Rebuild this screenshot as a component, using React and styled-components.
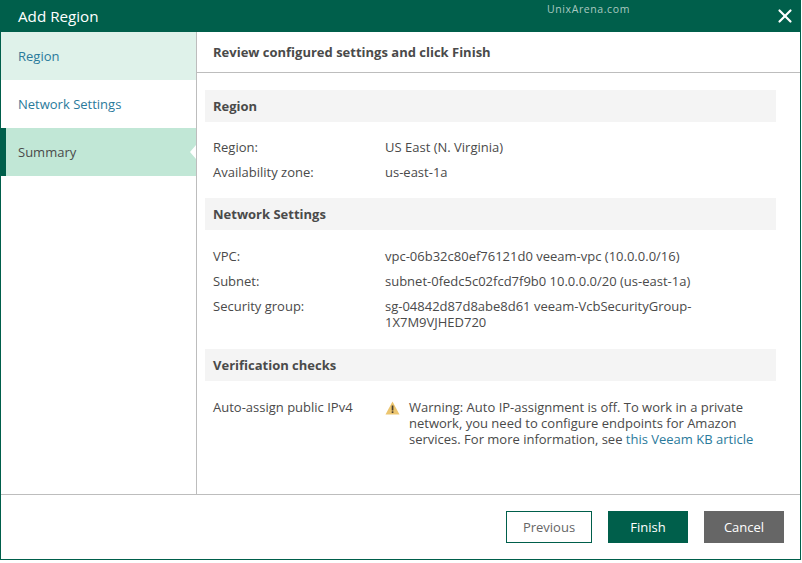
import React from "react";
import styled, { createGlobalStyle } from "styled-components";
import { X } from "lucide-react";

const GlobalStyle = createGlobalStyle`
  html, body {
    margin: 0;
    padding: 0;
    background: #fff;
  }
  * {
    box-sizing: border-box;
  }
`;

const Dialog = styled.div`
  width: 801px;
  height: 560px;
  display: flex;
  flex-direction: column;
  background: #fff;
  border: solid #005f4b;
  border-width: 0 1px 1px 1px;
  box-shadow: 0 3px 0 #a9b0ad;
  font-family: "Open Sans", "Liberation Sans", sans-serif;
  font-size: 13px;
  color: #4a4a4a;
`;

const TitleBar = styled.div`
  position: relative;
  flex: 0 0 32px;
  display: flex;
  align-items: center;
  justify-content: space-between;
  padding: 0 4px 0 17px;
  background: #005f4b;
  color: #fff;
`;

const Title = styled.div`
  font-size: 15.2px;
  line-height: 32px;
`;

const Watermark = styled.div`
  position: absolute;
  left: 546px;
  top: 2px;
  font-size: 10.5px;
  letter-spacing: 0.6px;
  line-height: 14px;
  color: #a9c9c0;
`;

const Body = styled.div`
  flex: 1;
  display: flex;
  min-height: 0;
`;

const Sidebar = styled.div`
  flex: 0 0 196px;
  border-right: 1px solid #bdbdbd;
`;

const NavItem = styled.div`
  position: relative;
  height: 48px;
  display: flex;
  align-items: center;
  padding-left: ${(p) => (p.$active ? "12px" : "17px")};
  background: ${(p) => (p.$active ? "#c1e7d6" : p.$done ? "#dff2ea" : "#fff")};
  border-left: ${(p) => (p.$active ? "5px solid #005f4b" : "none")};
  color: ${(p) => (p.$active ? "#4a4a4a" : "#2a7a9b")};

  ${(p) =>
    p.$active &&
    `&::after {
      content: "";
      position: absolute;
      right: 0;
      top: 17px;
      border: 7px solid transparent;
      border-left: 0;
      border-right: 6px solid #fff;
    }`}
`;

const Main = styled.div`
  flex: 1;
  display: flex;
  flex-direction: column;
  min-width: 0;
`;

const MainHeader = styled.div`
  flex: 0 0 41px;
  display: flex;
  align-items: center;
  padding-left: 16px;
  border-bottom: 1px solid #bdbdbd;
  font-weight: 700;
  color: #4a4a4a;
`;

const Content = styled.div`
  padding: 17px 24px 0 8px;
`;

const Section = styled.div`
  margin-bottom: ${(p) => p.$gap || 0}px;
`;

const SectionTitle = styled.div`
  height: 32px;
  display: flex;
  align-items: center;
  padding-left: 8px;
  background: #f4f4f4;
  font-weight: 700;
  color: #4a4a4a;
`;

const Rows = styled.div`
  padding-top: ${(p) => p.$top}px;
`;

const Row = styled.div`
  display: flex;
  padding-left: 8px;
  min-height: 25px;
  line-height: 16px;
  padding-top: 3px;
`;

const Label = styled.div`
  flex: 0 0 172px;
`;

const Value = styled.div`
  flex: 1;
`;

const Warning = styled.div`
  display: flex;
  gap: 9px;
  flex: 1;
`;

const WarningText = styled.div`
  width: 370px;
  line-height: 16px;
`;

const Link = styled.a`
  color: #2a7a9b;
  text-decoration: none;
`;

const Footer = styled.div`
  flex: 0 0 65px;
  display: flex;
  justify-content: flex-end;
  align-items: flex-start;
  gap: 16px;
  padding: 16px 16px 0 0;
  border-top: 1px solid #bdbdbd;
`;

const Button = styled.button`
  width: ${(p) => p.$w}px;
  height: 32px;
  padding: 0;
  font: inherit;
  background: ${(p) => p.$bg};
  color: ${(p) => p.$fg};
  border: 1px solid ${(p) => p.$bd};
`;

function WarnIcon() {
  return (
    <svg width="15" height="14" viewBox="0 0 15 14" style={{ flex: "none", marginTop: 2 }}>
      <path d="M7.5 0.5 L14.5 13.5 H0.5 Z" fill="#ecc56f" />
      <rect x="6.7" y="4.5" width="1.7" height="5" fill="#4a4030" />
      <rect x="6.7" y="10.3" width="1.7" height="1.7" fill="#4a4030" />
    </svg>
  );
}

export default function App() {
  return (
    <>
      <GlobalStyle />
      <Dialog>
        <TitleBar>
          <Title>Add Region</Title>
          <Watermark>UnixArena.com</Watermark>
          <X size={22} strokeWidth={2.4} color="#fff" />
        </TitleBar>
        <Body>
          <Sidebar>
            <NavItem $done>Region</NavItem>
            <NavItem>Network Settings</NavItem>
            <NavItem $active>Summary</NavItem>
          </Sidebar>
          <Main>
            <MainHeader>Review configured settings and click Finish</MainHeader>
            <Content>
              <Section $gap={12}>
                <SectionTitle>Region</SectionTitle>
                <Rows $top={14}>
                  <Row>
                    <Label>Region:</Label>
                    <Value>US East (N. Virginia)</Value>
                  </Row>
                  <Row>
                    <Label>Availability zone:</Label>
                    <Value>us-east-1a</Value>
                  </Row>
                </Rows>
              </Section>
              <Section $gap={19}>
                <SectionTitle>Network Settings</SectionTitle>
                <Rows $top={15}>
                  <Row>
                    <Label>VPC:</Label>
                    <Value>vpc-06b32c80ef76121d0 veeam-vpc (10.0.0.0/16)</Value>
                  </Row>
                  <Row>
                    <Label>Subnet:</Label>
                    <Value>subnet-0fedc5c02fcd7f9b0 10.0.0.0/20 (us-east-1a)</Value>
                  </Row>
                  <Row>
                    <Label>Security group:</Label>
                    <Value>
                      sg-04842d87d8abe8d61 veeam-VcbSecurityGroup-
                      <br />
                      1X7M9VJHED720
                    </Value>
                  </Row>
                </Rows>
              </Section>
              <Section>
                <SectionTitle>Verification checks</SectionTitle>
                <Rows $top={15}>
                  <Row>
                    <Label>Auto-assign public IPv4</Label>
                    <Warning>
                      <WarnIcon />
                      <WarningText>
                        Warning: Auto IP-assignment is off. To work in a private
                        <br />
                        network, you need to configure endpoints for Amazon
                        <br />
                        services. For more information, see <Link>this Veeam KB article</Link>
                      </WarningText>
                    </Warning>
                  </Row>
                </Rows>
              </Section>
            </Content>
          </Main>
        </Body>
        <Footer>
          <Button $w={86} $bg="#fff" $fg="#666" $bd="#005f4b">Previous</Button>
          <Button $w={80} $bg="#005f4b" $fg="#fff" $bd="#005f4b">Finish</Button>
          <Button $w={80} $bg="#666" $fg="#fff" $bd="#666">Cancel</Button>
        </Footer>
      </Dialog>
    </>
  );
}
